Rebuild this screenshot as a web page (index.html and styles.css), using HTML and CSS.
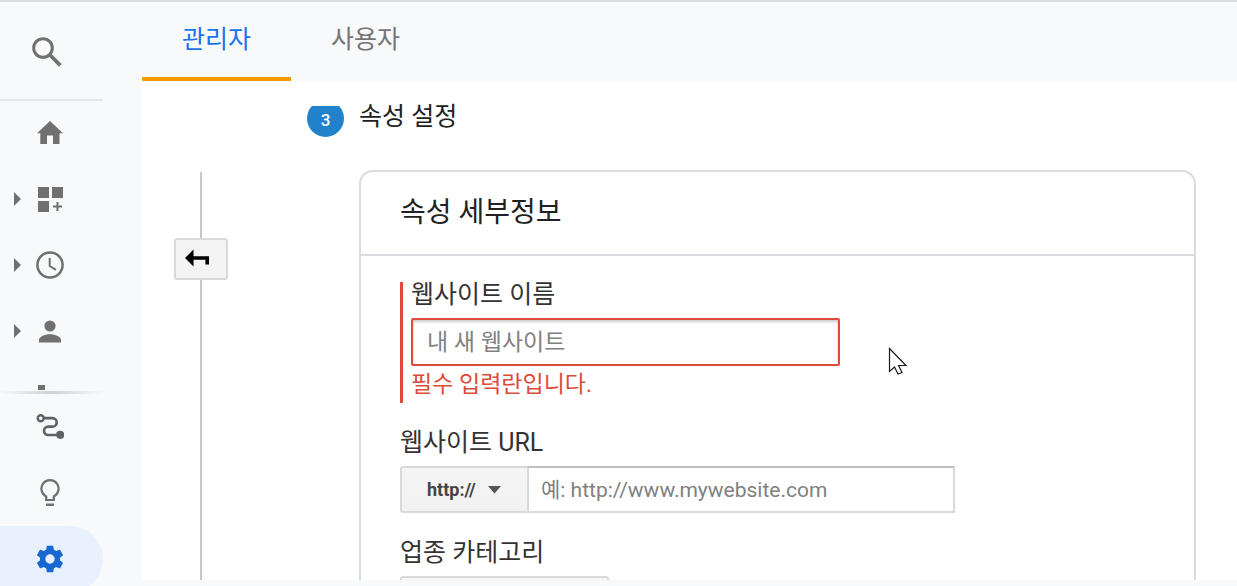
FILE: index.html
```html
<!DOCTYPE html>
<html lang="ko">
<head>
<meta charset="utf-8">
<meta name="viewport" content="width=device-width, initial-scale=1">
<title>속성 설정</title>
<link rel="stylesheet" href="styles.css">
</head>
<body>
<div class="app">
  <aside class="sidebar">
    <button class="search" type="button" aria-label="검색">
      <svg width="30" height="30" viewBox="0 0 30 30"><circle cx="11" cy="11" r="9.3" fill="none" stroke="currentColor" stroke-width="3"/><path d="M18 18l10.300 10.300" stroke="currentColor" stroke-width="3.800"/></svg>
    </button>
    <nav class="nav nav-main" aria-label="보고서">
      <button class="nav-item" type="button" aria-label="홈">
        <svg class="icon" width="28" height="28" viewBox="0 0 28 28"><path d="M14 2L1 14.300h3.300V25H11v-8.500h6V25h6.500V14.300H27z" fill="currentColor"/></svg>
      </button>
      <button class="nav-item" type="button" aria-label="맞춤설정">
        <svg class="arrow" width="7" height="14" viewBox="0 0 7 14"><path d="M0 0l7 7-7 7z" fill="currentColor"/></svg>
        <svg class="icon" width="28" height="28" viewBox="0 0 28 28"><path d="M2 2h11v11H2zM16 2h11v11H16zM2 16h11v11H2zM20.500 17h2v3.500H26v2h-3.500V26h-2v-3.500H17v-2h3.500z" fill="currentColor"/></svg>
      </button>
      <button class="nav-item" type="button" aria-label="실시간">
        <svg class="arrow" width="7" height="14" viewBox="0 0 7 14"><path d="M0 0l7 7-7 7z" fill="currentColor"/></svg>
        <svg class="icon" width="28" height="28" viewBox="0 0 28 28"><circle cx="14" cy="14" r="12.600" fill="none" stroke="currentColor" stroke-width="2.500"/><path d="M13.700 7v8l6.300 3.800" fill="none" stroke="currentColor" stroke-width="2"/></svg>
      </button>
      <button class="nav-item" type="button" aria-label="잠재고객">
        <svg class="arrow" width="7" height="14" viewBox="0 0 7 14"><path d="M0 0l7 7-7 7z" fill="currentColor"/></svg>
        <svg class="icon" width="28" height="28" viewBox="0 0 28 28"><circle cx="14" cy="9" r="5.600" fill="currentColor"/><path d="M3 25.500v-2.700c0-3.700 7.300-5.600 11-5.600s11 1.900 11 5.600v2.700z" fill="currentColor"/></svg>
      </button>
      <button class="nav-item" type="button" aria-label="획득">
        <svg class="icon" width="28" height="28" viewBox="0 0 28 28"><path d="M2 2h7v5H2zM9 8h7v6H9z" fill="currentColor"/></svg>
      </button>
    </nav>
    <nav class="nav nav-foot" aria-label="도구">
      <button class="nav-item" type="button" aria-label="기여 분석">
        <svg class="icon icon-dark" width="28" height="28" viewBox="0 0 28 28"><circle cx="4.700" cy="5.200" r="3" fill="none" stroke="currentColor" stroke-width="2.400"/><circle cx="24.200" cy="21.800" r="4.100" fill="currentColor"/><path d="M8 5.200h8.500a4.200 4.200 0 0 1 0 8.400h-4.300a4.200 4.200 0 0 0 0 8.400H21" fill="none" stroke="currentColor" stroke-width="2.700"/></svg>
      </button>
      <button class="nav-item" type="button" aria-label="탐색">
        <svg class="icon" width="28" height="28" viewBox="0 0 28 28"><path d="M10.200 21v-3.600a8.600 8.600 0 1 1 7.600 0V21z" fill="none" stroke="currentColor" stroke-width="2.200"/><path d="M10 24.500h8v1.500q0 1-1 1h-6q-1 0-1-1z" fill="currentColor"/></svg>
      </button>
      <button class="nav-item is-active" type="button" aria-label="관리" aria-current="page">
        <svg class="icon" width="32" height="32" viewBox="0 0 24 24"><path d="M19.430 12.980c.04-.32.070-.64.070-.98s-.03-.66-.07-.98l2.110-1.650c.19-.15.240-.42.120-.64l-2-3.460c-.12-.22-.39-.3-.61-.22l-2.490 1c-.52-.4-1.080-.73-1.690-.98l-.38-2.650C14.460 2.180 14.250 2 14 2h-4c-.25 0-.46.180-.49.420l-.38 2.650c-.61.250-1.170.590-1.690.98l-2.490-1c-.23-.09-.49 0-.61.220l-2 3.460c-.13.220-.07.490.12.640l2.110 1.650c-.04.320-.07.650-.07.980s.03.660.07.980l-2.110 1.650c-.19.150-.24.420-.12.640l2 3.460c.12.220.39.300.61.220l2.490-1c.52.400 1.080.730 1.690.980l.38 2.650c.03.240.24.420.49.420h4c.25 0 .46-.18.490-.42l.38-2.650c.61-.25 1.170-.59 1.690-.98l2.490 1c.23.090.49 0 .61-.22l2-3.460c.12-.22.070-.49-.12-.64zM12 15.500A3.500 3.500 0 1 1 12 8.500a3.500 3.500 0 0 1 0 7z" fill="currentColor"/></svg>
      </button>
    </nav>
  </aside>

  <main class="main">
    <div class="tabs" role="tablist">
      <button class="tab is-selected" type="button" role="tab" aria-selected="true">관리자</button>
      <button class="tab" type="button" role="tab" aria-selected="false">사용자</button>
    </div>
    <div class="panel">
      <div class="flow">
        <div class="rail">
          <button class="back" type="button" aria-label="뒤로">
            <svg width="26" height="18" viewBox="0 0 26 18"><path d="M0 9l8.500-8.500v6.800H24V15.500h-3.600v-4.700H8.500v6.700z" fill="#000"/></svg>
          </button>
        </div>
        <section class="step">
          <span class="badge">3</span>
          <h1 class="step-title">속성 설정</h1>
          <form class="card">
            <h2 class="card-title">속성 세부정보</h2>
            <div class="card-body">
              <div class="field has-error">
                <label class="label" for="site-name">웹사이트 이름</label>
                <input class="input" id="site-name" type="text" placeholder="내 새 웹사이트" aria-describedby="site-name-error">
                <p class="error" id="site-name-error">필수 입력란입니다.</p>
              </div>
              <div class="field">
                <label class="label" for="site-url">웹사이트 URL</label>
                <div class="url">
                  <div class="scheme">
                    <select class="select" aria-label="프로토콜"><option>http://</option><option>https://</option></select>
                    <svg class="caret" width="13" height="8" viewBox="0 0 13 8"><path d="M0 0h13L6.500 7.500z" fill="currentColor"/></svg>
                  </div>
                  <input class="input" id="site-url" type="text" placeholder="예: http://www.mywebsite.com">
                </div>
              </div>
              <div class="field">
                <label class="label" for="category">업종 카테고리</label>
                <select class="select category" id="category"><option></option></select>
              </div>
            </div>
          </form>
        </section>
      </div>
    </div>
  </main>
  <svg class="cursor" width="20" height="29" viewBox="0 0 20 29" aria-hidden="true"><path d="M1.500 1.500v23l5-4.500 3.500 7 4-1.500-3.500-7h7.500z" fill="#fff" stroke="#1b1b26" stroke-width="1.200"/></svg>
</div>
</body>
</html>
```
FILE: styles.css
```css
* { box-sizing: border-box; }

body {
  margin: 0;
  overflow: hidden;
  background: #f8f9fb;
  color: #212121;
  font-family: Roboto, "Noto Sans CJK KR", sans-serif;
  font-size: 25px;
  line-height: 24px;
}

h1, h2, p { margin: 0; font-weight: 400; }

button, input, select { font: inherit; color: inherit; }

button { padding: 0; border: 0; background: none; }

svg { display: block; flex: none; }

.app {
  display: flex;
  height: 100vh;
  border-top: 2px solid #dadce0;
}

/* Sidebar */
.sidebar {
  display: flex;
  flex-direction: column;
  flex: none;
  width: 142px;
  padding-right: 39px;
  color: #707070;
}

.search {
  display: flex;
  align-items: center;
  flex: none;
  height: 99px;
  padding-top: 2px;
  padding-left: 32px;
  border-bottom: 2px solid #e3e5e8;
}

.nav { display: flex; flex-direction: column; }

.nav-main {
  flex: 1;
  min-height: 0;
  overflow: hidden;
}

.nav-foot {
  flex: none;
  margin-bottom: -6px;
  border-top: 3px solid;
  border-image: linear-gradient(90deg, #f8f9fb, #cfd0d2 50%, #f8f9fb) 1;
}

.nav-item {
  display: grid;
  grid-template-columns: 7px 32px;
  column-gap: 13px;
  align-items: center;
  flex: none;
  height: 66px;
  padding-left: 14px;
}

.nav-main .nav-item { padding-bottom: 2px; }

.icon { grid-column: 2; justify-self: center; }

.arrow { grid-column: 1; grid-row: 1; }

.icon-dark { color: #5f6368; }

.is-active {
  border-radius: 0 33px 33px 0;
  background: #e8f0fe;
  color: #1967d2;
}

/* Main area */
.main {
  display: flex;
  flex-direction: column;
  flex: 1;
  min-width: 0;
  padding-bottom: 6px;
}

.tabs { display: flex; flex: none; }

.tab {
  height: 79px;
  padding: 0 40px;
  border-bottom: 4px solid transparent;
  color: #757575;
}

.is-selected { border-color: #ff9800; color: #1a73e8; }

.panel {
  display: flex;
  flex: 1;
  min-height: 0;
  padding-top: 25px;
  overflow: hidden;
  background: #fff;
}

.flow {
  display: grid;
  grid-template-columns: 118px 1fr;
  column-gap: 47px;
  flex: 1;
}

.rail {
  display: flex;
  flex-direction: column;
  align-items: center;
  padding-top: 66px;
}

.rail::before,
.rail::after {
  width: 2px;
  background: #c8c8c8;
  content: "";
}

.rail::before { height: 66px; }

.rail::after { flex: 1; }

.back {
  display: grid;
  align-items: center;
  width: 54px;
  height: 42px;
  padding: 0 0 3px 9px;
  border: 2px solid #d9d9d9;
  border-radius: 3px;
  background: #f3f3f3;
}

.step {
  display: grid;
  grid-template-columns: 37px 1fr;
  grid-template-rows: 31px auto;
  gap: 33px 15px;
  padding-right: 41px;
}

.badge {
  display: grid;
  place-items: center;
  height: 37px;
  margin-top: -6px;
  padding-top: 2px;
  border-radius: 50%;
  background: #2182cb;
  color: #fff;
  font-size: 17px;
  font-weight: 500;
  clip-path: inset(6px 0 0);
}

.step-title { font-size: 25px; line-height: 22px; }

.card {
  grid-column: 2;
  border: 2px solid #dadce0;
  border-radius: 14px;
}

.card-title {
  padding: 28px 39px;
  border-bottom: 2px solid #dadce0;
  font-size: 28px;
  line-height: 26px;
}

.card-body {
  display: grid;
  gap: 27px;
  padding: 26px 39px;
  color: #333;
}

.label { display: block; margin-bottom: 10px; line-height: 26px; }

.input {
  display: block;
  width: 100%;
  height: 47px;
  padding: 0 12px;
  border: 2px solid #d9d9d9;
  border-top-color: #c0c0c0;
  background: #fff;
  font-size: 21px;
}

.input::placeholder { color: #808080; opacity: 1; }

.has-error {
  max-width: 440px;
  padding-left: 8px;
  border-left: 3px solid #dd4b39;
}

.has-error .input {
  height: 48px;
  padding: 0 14px;
  border-color: #dd4b39;
  border-radius: 2px;
  box-shadow: inset 0 2px 3px #ccc;
  font-size: 23px;
}

.error {
  color: #dd4b39;
  font-size: 23px;
  line-height: 37px;
}

.url {
  display: grid;
  grid-template-columns: 127px 1fr;
  max-width: 555px;
}

.scheme { display: grid; align-items: center; }

.select {
  grid-area: 1 / 1;
  width: 100%;
  height: 47px;
  padding: 0 25px;
  border: 2px solid #d9d9d9;
  border-radius: 3px 0 0 3px;
  background: linear-gradient(#f5f5f5, #f1f1f1);
  color: #444;
  font-size: 18px;
  font-weight: 700;
  appearance: none;
}

.scheme .select { border-right: 0; }

.caret {
  grid-area: 1 / 1;
  justify-self: end;
  margin-right: 26px;
  color: #555;
  pointer-events: none;
}

.category { max-width: 209px; border-radius: 3px; }

/* Pointer over the page */
.cursor { position: absolute; top: 347px; left: 888px; pointer-events: none; }
```
